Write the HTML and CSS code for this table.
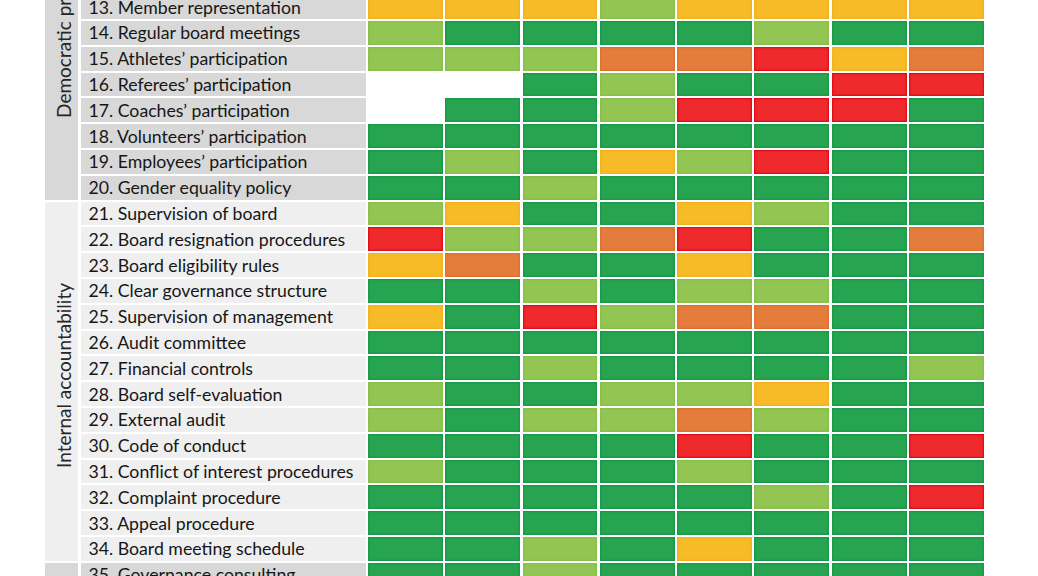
FILE: index.html
```html
<!DOCTYPE html>
<html lang="en">
<head>
<meta charset="utf-8">
<title>Governance indicators matrix</title>
<link rel="stylesheet" href="styles.css">
</head>
<body>
<div class="matrix">
  <div class="group group-dark group-demo span-8"><span>Democratic process</span></div>
  <div class="label dark">13. Member representation</div>
  <div class="c y"></div><div class="c y"></div><div class="c y"></div><div class="c l"></div><div class="c y"></div><div class="c y"></div><div class="c y"></div><div class="c y"></div>
  <div class="label dark">14. Regular board meetings</div>
  <div class="c l"></div><div class="c g"></div><div class="c g"></div><div class="c g"></div><div class="c g"></div><div class="c l"></div><div class="c g"></div><div class="c g"></div>
  <div class="label dark">15. Athletes’ participation</div>
  <div class="c l"></div><div class="c l"></div><div class="c l"></div><div class="c o"></div><div class="c o"></div><div class="c r"></div><div class="c y"></div><div class="c o"></div>
  <div class="label dark">16. Referees’ participation</div>
  <div class="c w"></div><div class="c w"></div><div class="c g"></div><div class="c l"></div><div class="c g"></div><div class="c g"></div><div class="c r"></div><div class="c r"></div>
  <div class="label dark">17. Coaches’ participation</div>
  <div class="c w"></div><div class="c g"></div><div class="c g"></div><div class="c l"></div><div class="c r"></div><div class="c r"></div><div class="c r"></div><div class="c g"></div>
  <div class="label dark">18. Volunteers’ participation</div>
  <div class="c g"></div><div class="c g"></div><div class="c g"></div><div class="c g"></div><div class="c g"></div><div class="c g"></div><div class="c g"></div><div class="c g"></div>
  <div class="label dark">19. Employees’ participation</div>
  <div class="c g"></div><div class="c l"></div><div class="c g"></div><div class="c y"></div><div class="c l"></div><div class="c r"></div><div class="c g"></div><div class="c g"></div>
  <div class="label dark">20. Gender equality policy</div>
  <div class="c g"></div><div class="c g"></div><div class="c l"></div><div class="c g"></div><div class="c g"></div><div class="c g"></div><div class="c g"></div><div class="c g"></div>

  <div class="group group-light group-int span-14"><span>Internal accountability</span></div>
  <div class="label light">21. Supervision of board</div>
  <div class="c l"></div><div class="c y"></div><div class="c g"></div><div class="c g"></div><div class="c y"></div><div class="c l"></div><div class="c g"></div><div class="c g"></div>
  <div class="label light">22. Board resignation procedures</div>
  <div class="c r"></div><div class="c l"></div><div class="c l"></div><div class="c o"></div><div class="c r"></div><div class="c g"></div><div class="c g"></div><div class="c o"></div>
  <div class="label light">23. Board eligibility rules</div>
  <div class="c y"></div><div class="c o"></div><div class="c g"></div><div class="c g"></div><div class="c y"></div><div class="c g"></div><div class="c g"></div><div class="c g"></div>
  <div class="label light">24. Clear governance structure</div>
  <div class="c g"></div><div class="c g"></div><div class="c l"></div><div class="c g"></div><div class="c l"></div><div class="c l"></div><div class="c g"></div><div class="c g"></div>
  <div class="label light">25. Supervision of management</div>
  <div class="c y"></div><div class="c g"></div><div class="c r"></div><div class="c l"></div><div class="c o"></div><div class="c o"></div><div class="c g"></div><div class="c g"></div>
  <div class="label light">26. Audit committee</div>
  <div class="c g"></div><div class="c g"></div><div class="c g"></div><div class="c g"></div><div class="c g"></div><div class="c g"></div><div class="c g"></div><div class="c g"></div>
  <div class="label light">27. Financial controls</div>
  <div class="c g"></div><div class="c g"></div><div class="c l"></div><div class="c g"></div><div class="c g"></div><div class="c g"></div><div class="c g"></div><div class="c l"></div>
  <div class="label light">28. Board self-evaluation</div>
  <div class="c l"></div><div class="c g"></div><div class="c g"></div><div class="c l"></div><div class="c l"></div><div class="c y"></div><div class="c g"></div><div class="c g"></div>
  <div class="label light">29. External audit</div>
  <div class="c l"></div><div class="c g"></div><div class="c l"></div><div class="c l"></div><div class="c o"></div><div class="c l"></div><div class="c g"></div><div class="c g"></div>
  <div class="label light">30. Code of conduct</div>
  <div class="c g"></div><div class="c g"></div><div class="c g"></div><div class="c g"></div><div class="c r"></div><div class="c g"></div><div class="c g"></div><div class="c r"></div>
  <div class="label light">31. Conflict of interest procedures</div>
  <div class="c l"></div><div class="c g"></div><div class="c g"></div><div class="c g"></div><div class="c l"></div><div class="c g"></div><div class="c g"></div><div class="c g"></div>
  <div class="label light">32. Complaint procedure</div>
  <div class="c g"></div><div class="c g"></div><div class="c g"></div><div class="c g"></div><div class="c g"></div><div class="c l"></div><div class="c g"></div><div class="c r"></div>
  <div class="label light">33. Appeal procedure</div>
  <div class="c g"></div><div class="c g"></div><div class="c g"></div><div class="c g"></div><div class="c g"></div><div class="c g"></div><div class="c g"></div><div class="c g"></div>
  <div class="label light">34. Board meeting schedule</div>
  <div class="c g"></div><div class="c g"></div><div class="c l"></div><div class="c g"></div><div class="c y"></div><div class="c g"></div><div class="c g"></div><div class="c g"></div>

  <div class="group group-dark span-1"><span></span></div>
  <div class="label dark">35. Governance consulting</div>
  <div class="c g"></div><div class="c g"></div><div class="c l"></div><div class="c g"></div><div class="c g"></div><div class="c g"></div><div class="c g"></div><div class="c g"></div>
</div>
</body>
</html>
```

FILE: styles.css
```css
html, body {
  margin: 0;
  padding: 0;
  background: #ffffff;
  overflow: hidden;
}

body {
  font-family: Lato, "Open Sans", "DejaVu Sans", sans-serif;
  color: #161616;
}

.matrix {
  display: grid;
  grid-template-columns: 33px 285px repeat(8, 74.8px);
  grid-auto-rows: 23.8px;
  column-gap: 2.5px;
  row-gap: 2px;
  margin: -4.8px 0 0 45px;
}

.group {
  display: flex;
  flex-direction: column;
  align-items: center;
  justify-content: center;
  font-size: 19px;
  color: #262626;
  padding-left: 4px;
}

.group span {
  writing-mode: vertical-rl;
  transform: rotate(180deg);
  white-space: nowrap;
  line-height: 1;
}

.group-demo {
  justify-content: flex-end;
  padding-bottom: 82px;
}

.group-int {
  padding-bottom: 12px;
}

.span-8 { grid-row: span 8; }
.span-14 { grid-row: span 14; }
.span-1 { grid-row: span 1; }

.group-dark { background: #d8d8d8; }
.group-light { background: #efefef; }

.label {
  display: flex;
  align-items: center;
  padding-left: 8px;
  font-size: 17.7px;
  white-space: nowrap;
}

.label.dark { background: #d8d8d8; }
.label.light { background: #efefef; }

.c {
  box-shadow: inset 0 0 2px 1px rgba(0, 0, 0, 0.10);
}

.c.g { background: #26a450; box-shadow: inset 0 0 2px 1px #159749; }
.c.l { background: #93c553; box-shadow: inset 0 0 2px 1px #86bd48; }
.c.y { background: #f6bb26; box-shadow: inset 0 0 2px 1px #f0b020; }
.c.o { background: #e47c3c; box-shadow: inset 0 0 2px 1px #dc6f2c; }
.c.r { background: #ee2a2c; box-shadow: inset 0 0 2px 1px #de0610; }
.c.w { background: #ffffff; box-shadow: none; }
```
